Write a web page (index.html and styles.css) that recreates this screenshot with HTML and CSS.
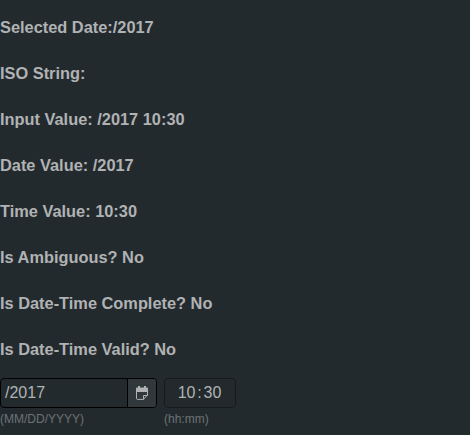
FILE: index.html
```html
<!DOCTYPE html>
<html lang="en">
<head>
<meta charset="utf-8">
<title>Date-Time</title>
<link rel="stylesheet" href="styles.css">
</head>
<body>
<div class="status">
<h3>Selected Date:/2017</h3>
<h3>ISO String:</h3>
<h3>Input Value: /2017 10:30</h3>
<h3>Date Value: /2017</h3>
<h3>Time Value: 10:30</h3>
<h3>Is Ambiguous? No</h3>
<h3>Is Date-Time Complete? No</h3>
<h3>Is Date-Time Valid? No</h3>
</div>
<div class="fields">
<div>
<div class="box date"><span class="value">/2017</span><button class="trigger" aria-label="Open calendar">
<svg width="14" height="16" viewBox="0 0 14 16"><path d="M1 7V3.500q0-1 1-1h1V1h2v1.500h4V1h2v1.500h1q1 0 1 1V7z" fill="#b0b2b3"/><path d="M1.500 6v7.400q0 1 1 1h6l4-4.400V6" fill="none" stroke="#b0b2b3"/><path d="M8.500 14.400V10.500h4" fill="none" stroke="#b0b2b3"/></svg>
</button></div>
<div class="hint">(MM/DD/YYYY)</div>
</div>
<div>
<div class="box time"><span>10</span><span class="colon">:</span><span>30</span></div>
<div class="hint">(hh:mm)</div>
</div>
</div>
</body>
</html>
```
FILE: styles.css
```css
body {
  margin: 0;
  background: #232a2e;
  color: #b0b2b3;
  font: 16px/24px "Liberation Sans", Arial, sans-serif;
  overflow: hidden;
}
.status {
  padding-top: 15px;
}
h3 {
  margin: 0 0 22px;
  font-size: 16.38px;
  line-height: 24px;
  font-weight: bold;
}
.fields {
  display: flex;
  gap: 7px;
  margin-top: -5px;
}
.box {
  display: flex;
  box-sizing: border-box;
  height: 30px;
  border: 1px solid #000;
  border-radius: 4px;
  line-height: 28px;
  overflow: hidden;
}
.date {
  width: 157px;
}
.value {
  flex: 1;
  padding-left: 4px;
}
.trigger {
  display: flex;
  align-items: center;
  justify-content: center;
  width: 29px;
  padding: 0;
  border: 0;
  border-left: 1px solid #000;
  background: #31383c;
}
.time {
  width: 72px;
  justify-content: center;
  padding-right: 1px;
  border-color: #171b1e;
}
.colon {
  width: 8px;
  text-align: center;
}
.hint {
  color: #6d7275;
  font-size: 12px;
  line-height: 22px;
}
```
